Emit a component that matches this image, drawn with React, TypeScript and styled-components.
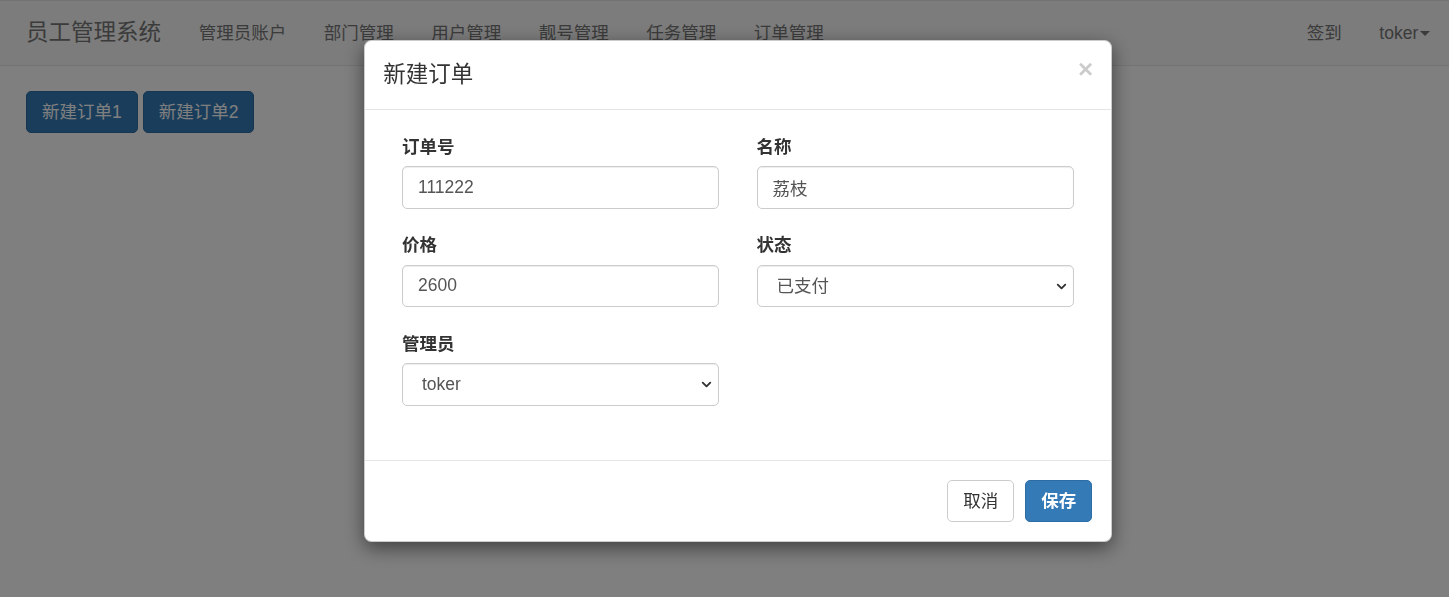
import React from "react";
import styled, { createGlobalStyle } from "styled-components";
import { ChevronDown } from "lucide-react";

const FONT = `"Liberation Sans", "Noto Sans CJK SC", sans-serif`;

const GlobalStyle = createGlobalStyle`
  html, body {
    margin: 0;
    padding: 0;
    background: #fff;
    font-family: ${FONT};
    font-size: 17.5px;
    color: #333;
  }
  * { box-sizing: border-box; }
`;

const navLinks = ["管理员账户", "部门管理", "用户管理", "靓号管理", "任务管理", "订单管理"];

export default function App() {
  return (
    <>
      <GlobalStyle />
      <Page>
        <Navbar>
          <Brand>员工管理系统</Brand>
          <NavList>
            {navLinks.map((l) => (
              <NavLink key={l}>{l}</NavLink>
            ))}
          </NavList>
          <NavRight>
            <NavLink>签到</NavLink>
            <NavLink>
              toker
              <Caret />
            </NavLink>
          </NavRight>
        </Navbar>
        <Toolbar>
          <Button $variant="primary">新建订单1</Button>
          <Button $variant="primary">新建订单2</Button>
        </Toolbar>
      </Page>

      <Backdrop />

      <Modal>
        <ModalHeader>
          <ModalTitle>新建订单</ModalTitle>
          <Close>×</Close>
        </ModalHeader>
        <ModalBody>
          <FormGrid>
            <Field label="订单号">
              <Input defaultValue="111222" />
            </Field>
            <Field label="名称">
              <Input defaultValue="荔枝" />
            </Field>
            <Field label="价格">
              <Input defaultValue="2600" />
            </Field>
            <Field label="状态">
              <Select options={["已支付", "待支付"]} />
            </Field>
            <Field label="管理员">
              <Select options={["toker"]} />
            </Field>
          </FormGrid>
        </ModalBody>
        <ModalFooter>
          <Button $variant="default">取消</Button>
          <Button $variant="primary" $bold>
            保存
          </Button>
        </ModalFooter>
      </Modal>
    </>
  );
}

const Field = ({ label, children }: { label: string; children: React.ReactNode }) => (
  <FormGroup>
    <Label>{label}</Label>
    {children}
  </FormGroup>
);

const Select = ({ options }: { options: string[] }) => (
  <SelectWrap>
    <SelectBox defaultValue={options[0]}>
      {options.map((o) => (
        <option key={o}>{o}</option>
      ))}
    </SelectBox>
    <Chevron size={15} strokeWidth={3} />
  </SelectWrap>
);

const Page = styled.div`
  min-height: 597px;
`;

const Navbar = styled.nav`
  display: flex;
  align-items: center;
  height: 66px;
  padding: 0 0 0 7px;
  background: #f8f8f8;
  border-bottom: 1px solid #e7e7e7;
  border-top: 1px solid #e7e7e7;
`;

const Brand = styled.a`
  padding: 0 19px;
  font-size: 22.5px;
  line-height: 32px;
  color: #777;
`;

const NavList = styled.div`
  display: flex;
`;

const NavRight = styled.div`
  display: flex;
  margin-left: auto;
`;

const NavLink = styled.a`
  display: flex;
  align-items: center;
  padding: 0 18.75px;
  font-size: 17.5px;
  line-height: 25px;
  color: #777;
`;

const Caret = styled.span`
  display: inline-block;
  margin-left: 2px;
  border-top: 5px solid #777;
  border-left: 5px solid transparent;
  border-right: 5px solid transparent;
`;

const Toolbar = styled.div`
  display: flex;
  gap: 5px;
  padding: 25px 26px 0;
`;

const Button = styled.button<{ $variant: "primary" | "default"; $bold?: boolean }>`
  height: 42px;
  padding: 0 15px;
  font-family: ${FONT};
  font-size: 17.5px;
  line-height: 25px;
  border-radius: 5px;
  border: 1px solid ${(p) => (p.$variant === "primary" ? "#2e6da4" : "#ccc")};
  background: ${(p) => (p.$variant === "primary" ? "#337ab7" : "#fff")};
  color: ${(p) => (p.$variant === "primary" ? "#fff" : "#333")};
  font-weight: ${(p) => (p.$bold ? 600 : 400)};
`;

const Backdrop = styled.div`
  position: fixed;
  inset: 0;
  background: rgba(0, 0, 0, 0.5);
`;

const Modal = styled.div`
  position: fixed;
  top: 40px;
  left: 363.5px;
  width: 748.5px;
  background: #fff;
  border: 1px solid rgba(0, 0, 0, 0.2);
  border-radius: 7.5px;
  box-shadow: 0 6px 19px rgba(0, 0, 0, 0.5);
`;

const ModalHeader = styled.div`
  display: flex;
  align-items: center;
  justify-content: space-between;
  height: 69px;
  padding: 0 18.75px;
  border-bottom: 1px solid #e5e5e5;
`;

const ModalTitle = styled.h4`
  margin: 0;
  font-size: 22.5px;
  line-height: 32px;
  font-weight: 400;
  color: #333;
`;

const Close = styled.span`
  margin-top: -13px;
  margin-right: -1px;
  font-size: 26px;
  font-weight: 700;
  line-height: 1;
  color: #000;
  opacity: 0.2;
`;

const ModalBody = styled.div`
  padding: 18.75px 18.75px 36px;
`;

const FormGrid = styled.div`
  display: grid;
  grid-template-columns: 1fr 1fr;
  column-gap: 37.5px;
  padding: 0 18.75px;
`;

const FormGroup = styled.div`
  display: flex;
  flex-direction: column;
  margin-bottom: 18.75px;
`;

const Label = styled.label`
  padding-top: 6px;
  margin-bottom: 6.25px;
  font-size: 17.5px;
  line-height: 25px;
  font-weight: 700;
  color: #333;
`;

const Input = styled.input`
  height: 42.5px;
  width: 100%;
  padding: 0 15px;
  font-family: ${FONT};
  font-size: 17.5px;
  color: #555;
  background: #fff;
  border: 1px solid #ccc;
  border-radius: 5px;
  box-shadow: inset 0 1px 1px rgba(0, 0, 0, 0.075);
  outline: none;
`;

const SelectWrap = styled.div`
  position: relative;
`;

const SelectBox = styled.select`
  appearance: none;
  height: 42.5px;
  width: 100%;
  padding: 0 19px;
  font-family: ${FONT};
  font-size: 17.5px;
  color: #555;
  background: #fff;
  border: 1px solid #ccc;
  border-radius: 5px;
  box-shadow: inset 0 1px 1px rgba(0, 0, 0, 0.075);
  outline: none;
`;

const Chevron = styled(ChevronDown)`
  position: absolute;
  right: 5px;
  top: 14px;
  color: #333;
  pointer-events: none;
`;

const ModalFooter = styled.div`
  display: flex;
  justify-content: flex-end;
  gap: 11px;
  padding: 18.75px;
  border-top: 1px solid #e5e5e5;
`;
